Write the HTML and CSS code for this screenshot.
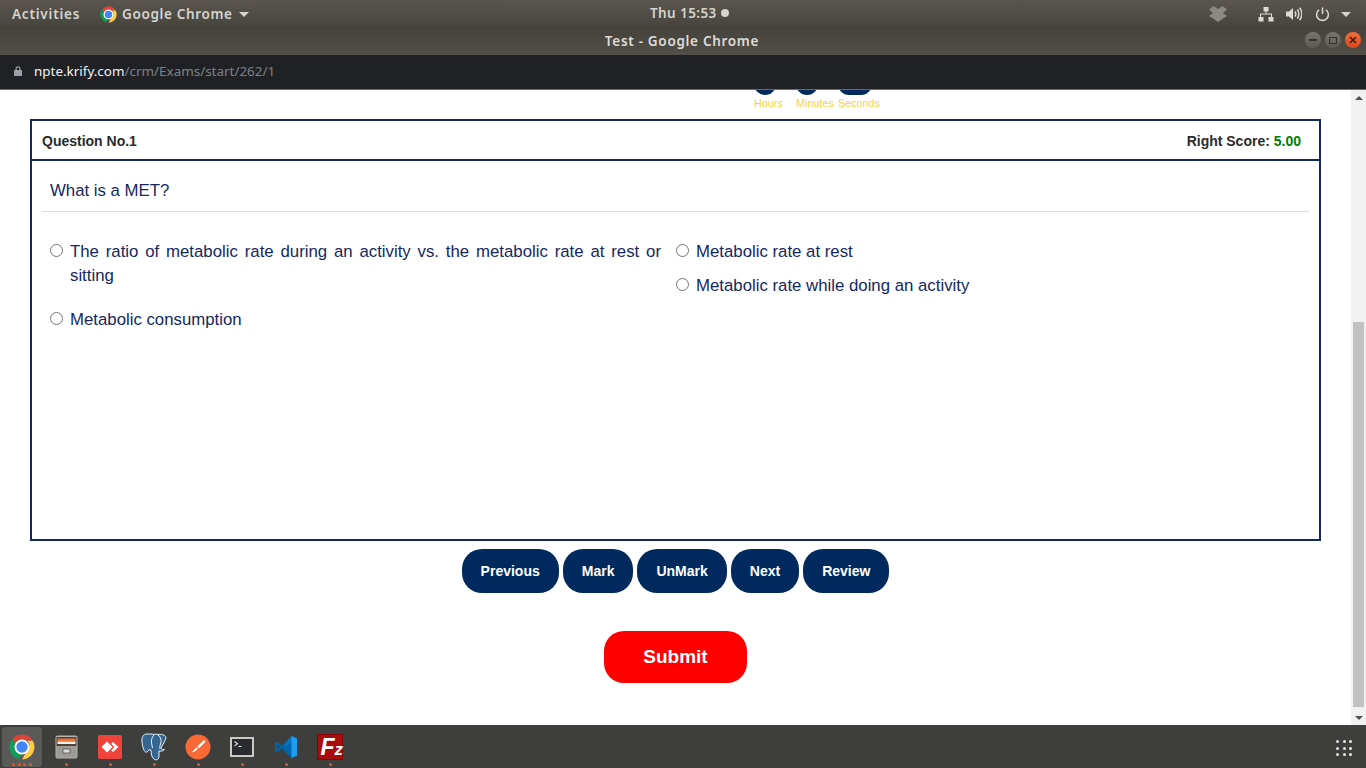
FILE: index.html
```html
<!DOCTYPE html>
<html lang="en">
<head>
    <meta charset="UTF-8">
    <meta name="viewport" content="width=device-width, initial-scale=1.0">
    <title>Test</title>
    <link rel="stylesheet" href="styles.css">
</head>
<body>
<div class="screen">
    <header class="topbar">
        <span class="activities">Activities</span>
        <span class="app-menu">
            <svg class="app-icon" viewBox="0 0 48 48" width="17" height="17">
                <path fill="#db4437" d="M24 1a23 23 0 0 1 19.9 11.5H24a11.5 11.5 0 0 0-11 8L6.3 9.300A23 23 0 0 1 24 1z"/>
                <path fill="#0f9d58" d="M4.100 35.500A23 23 0 0 1 6.300 9.300l10 17.300a9 9 0 0 0 7.700 8.900l-6.700 10.500A23 23 0 0 1 4.100 35.500z"/>
                <path fill="#ffcd40" d="M43.900 12.500A23 23 0 0 1 24 47l10-17.300a11.500 11.500 0 0 0 0-17.200z"/>
                <circle cx="24" cy="24" r="14" fill="#fff"/>
                <circle cx="24" cy="24" r="10.500" fill="#4285f4"/>
            </svg>
            <span class="app-name">Google Chrome</span>
            <i class="caret"></i>
        </span>
        <span class="clock">Thu 15:53<i class="clock-dot"></i></span>
        <span class="tray">
            <svg class="tray-dropbox" viewBox="0 0 18 16" width="18" height="16"><path fill="#8b8983" d="M0 3.500L4.500 0 9 3l4.500-3L18 3.500 14 7l4 3-4 2.500L9 16l-5-3.500L0 10l4-3z"/></svg>
            <svg class="tray-net" viewBox="0 0 16 16" width="16" height="16"><path fill="#dcdad5" d="M5.500 1h5v4.500h-2v2H14V11h1.500v4.500h-5V11H13V8.500H3V11h2.500v4.500h-5V11H2V7.500h5.500v-2h-2z"/></svg>
            <svg class="tray-vol" viewBox="0 0 16 16" width="16" height="16"><path fill="#dcdad5" d="M0 5.500h3L7 2v12l-4-3.500H0z"/><path fill="none" stroke="#dcdad5" stroke-width="1.500" d="M9 5.500c1 1.500 1 3.500 0 5M11.300 3.500c2 2.500 2 6.500 0 9M13.600 1.800c3 3.500 3 8.900 0 12.400"/></svg>
            <svg class="tray-power" viewBox="0 0 16 16" width="15" height="16"><path fill="none" stroke="#dcdad5" stroke-width="1.600" d="M4.300 3.600a6.300 6.300 0 1 0 7.400 0M8 1v7"/></svg>
            <i class="caret"></i>
        </span>
    </header>

    <div class="titlebar">
        <span class="window-title">Test - Google Chrome</span>
        <span class="window-buttons">
            <span class="win-btn"><i class="win-min"></i></span>
            <span class="win-btn"><i class="win-max"></i></span>
            <span class="win-btn win-close">
                <svg viewBox="0 0 8 8" width="8" height="8"><path stroke="#3a1a0c" stroke-width="1.500" d="M1 1l6 6M7 1L1 7"/></svg>
            </span>
        </span>
    </div>

    <div class="urlbar">
        <svg class="lock" viewBox="0 0 8 10" width="8" height="10"><path fill="#9aa0a6" d="M1.500 4V2.800a2.500 2.500 0 0 1 5 0V4H8v6H0V4zM2.700 4h2.600V2.800a1.300 1.300 0 0 0-2.600 0z"/></svg>
        <span class="url"><b>npte.krify.com</b>/crm/Exams/start/262/1</span>
    </div>

    <div class="viewport">
        <main class="page">
            <div class="timer">
                <div class="timer-item timer-hours"><span class="timer-blob"></span><span class="timer-label">Hours</span></div>
                <div class="timer-item timer-minutes"><span class="timer-blob"></span><span class="timer-label">Minutes</span></div>
                <div class="timer-item timer-seconds"><span class="timer-blob timer-blob-wide"></span><span class="timer-label">Seconds</span></div>
            </div>

            <section class="question-card">
                <div class="question-head">
                    <span>Question No.1</span>
                    <span>Right Score: <span class="score">5.00</span></span>
                </div>
                <div class="question-body">
                    <p class="question-text">What is a MET?</p>
                    <div class="options">
                        <div class="options-col options-left">
                            <label class="option"><input type="radio" name="opt"><span>The ratio of metabolic rate during an activity vs. the metabolic rate at rest or sitting</span></label>
                            <label class="option"><input type="radio" name="opt"><span>Metabolic consumption</span></label>
                        </div>
                        <div class="options-col options-right">
                            <label class="option"><input type="radio" name="opt"><span>Metabolic rate at rest</span></label>
                            <label class="option"><input type="radio" name="opt"><span>Metabolic rate while doing an activity</span></label>
                        </div>
                    </div>
                </div>
            </section>

            <div class="nav-buttons">
                <button type="button" class="btn-nav">Previous</button>
                <button type="button" class="btn-nav">Mark</button>
                <button type="button" class="btn-nav">UnMark</button>
                <button type="button" class="btn-nav">Next</button>
                <button type="button" class="btn-nav">Review</button>
            </div>

            <div class="submit-row">
                <button type="button" class="btn-submit">Submit</button>
            </div>
        </main>

        <div class="scrollbar">
            <i class="scroll-up"></i>
            <div class="scroll-track"><div class="scroll-thumb"></div></div>
            <i class="scroll-down"></i>
        </div>
    </div>

    <footer class="dock">
        <div class="dock-item dock-active">
            <svg viewBox="0 0 48 48" width="26" height="26">
                <path fill="#db4437" d="M24 1a23 23 0 0 1 19.900 11.500H24a11.500 11.500 0 0 0-11 8L6.300 9.300A23 23 0 0 1 24 1z"/>
                <path fill="#0f9d58" d="M4.100 35.500A23 23 0 0 1 6.300 9.300l10 17.300a9 9 0 0 0 7.700 8.900l-6.700 10.500A23 23 0 0 1 4.100 35.500z"/>
                <path fill="#ffcd40" d="M43.900 12.500A23 23 0 0 1 24 47l10-17.300a11.500 11.500 0 0 0 0-17.200z"/>
                <circle cx="24" cy="24" r="14" fill="#fff"/>
                <circle cx="24" cy="24" r="10.500" fill="#4285f4"/>
            </svg>
            <span class="dock-dots"><i></i><i></i><i></i><i></i></span>
        </div>
        <div class="dock-item">
            <svg viewBox="0 0 23 24" width="23" height="24">
                <rect x="0.500" y="0.500" width="22" height="23" rx="2" fill="#b5b4af"/>
                <rect x="1.500" y="2" width="20" height="9" fill="#4f4038"/>
                <rect x="2.500" y="3.500" width="18" height="3" fill="#e8743b"/>
                <rect x="2.500" y="6.500" width="18" height="2.500" fill="#f3efe6"/>
                <rect x="1.500" y="11" width="20" height="11.500" fill="#9c9b96"/>
                <rect x="8" y="14" width="7" height="4" fill="#dcdbd6" stroke="#555" stroke-width="0.800"/>
            </svg>
            <span class="dock-dots"><i></i></span>
        </div>
        <div class="dock-item">
            <svg viewBox="0 0 24 24" width="24" height="24">
                <rect width="24" height="24" rx="2" fill="#ef443b"/>
                <path fill="#fff" d="M9 6.500l5.500 5.500L9 17.500 3.500 12z"/>
                <path fill="#fff" d="M15 7l5.500 5-5.500 5-1.800-1.800 3.200-3.200-3.200-3.200z"/>
            </svg>
            <span class="dock-dots"><i></i></span>
        </div>
        <div class="dock-item">
            <svg viewBox="0 0 26 28" width="26" height="28">
                <path fill="#336791" stroke="#fff" stroke-width="0.900" d="M6 1c-4 0-5.500 3.500-5 8 .4 3.500 1.500 9 3.500 10 1.500.7 2.700-1 3.500-2.500 1 .5 1.500.5 2 .5 0 3 .5 8 3.500 9.500 2.500 1 4.500-.5 4.500-3.500v-5c2 .5 3.500.2 5.500-1.500-1.500.2-3 0-3.500-1.500C22 11 25 6.500 25 4.500 24 1.500 20 1 17 1.500 15.500 1 14 1 13 1.500 11 .8 8.500 1 6 1z"/>
                <path fill="none" stroke="#fff" stroke-width="0.900" d="M13 2c-2 2-3 5-2.500 8 .2 2 1 3 1 5M17 2c3 2 3.500 6 2.500 9-.5 1.500-1 3-.5 5"/>
            </svg>
            <span class="dock-dots"><i></i></span>
        </div>
        <div class="dock-item">
            <svg viewBox="0 0 26 26" width="26" height="26">
                <circle cx="13" cy="13" r="12.500" fill="#f76935"/>
                <path fill="#fff" d="M18.500 6.500c1-.7 2.300.7 1.500 1.700l-6 6-1.800-1.800zM11.500 13.500l1.500 1.500-3.800 3-1.200-.4-.6 1-.7-.6 1-1z"/>
            </svg>
            <span class="dock-dots"><i></i></span>
        </div>
        <div class="dock-item">
            <svg viewBox="0 0 24 20" width="24" height="20">
                <rect width="24" height="20" fill="#c9c9c5"/>
                <rect x="2" y="2" width="20" height="16" fill="#2a2b2e"/>
                <path fill="none" stroke="#e8e8e8" stroke-width="1.100" d="M4.500 4.500l3 2.200-3 2.200"/>
                <path stroke="#e8e8e8" stroke-width="1" d="M8.500 9.500h3"/>
            </svg>
            <span class="dock-dots"><i></i></span>
        </div>
        <div class="dock-item">
            <svg viewBox="0 0 24 24" width="24" height="24">
                <path fill="#0065a9" d="M17.500 1L7.800 10.500 3 6.700 1 7.800v8.400l2 1.100 4.800-3.800 9.700 9.500z"/>
                <path fill="#007acc" d="M17.500 1L23 3.500v17L17.500 23V7l-8 5z"/>
                <path fill="#1f9cf0" d="M17.500 1L23 3.500v17L17.500 23z"/>
                <path fill="#3e3e3d" d="M3.500 9.500L6 12l-2.500 2.500z"/>
            </svg>
            <span class="dock-dots"><i></i></span>
        </div>
        <div class="dock-item">
            <svg viewBox="0 0 26 26" width="26" height="26">
                <rect width="26" height="26" fill="#8b0000"/>
                <rect x="1" y="1" width="24" height="24" fill="#a80d0d"/>
                <text class="fz-logo" x="3.500" y="21"><tspan class="fz-big">F</tspan><tspan class="fz-small">z</tspan></text>
            </svg>
            <span class="dock-dots"><i></i></span>
        </div>
        <div class="dock-grid">
            <i></i><i></i><i></i><i></i><i></i><i></i><i></i><i></i><i></i>
        </div>
    </footer>
</div>
</body>
</html>
```

FILE: styles.css
```css
* {
    box-sizing: border-box;
}
html, body {
    margin: 0;
    height: 100%;
    overflow: hidden;
}
body {
    font-family: "Liberation Sans", Arial, sans-serif;
    background: #fff;
}
.screen {
    display: flex;
    flex-direction: column;
    height: 768px;
}

/* system top bar */
.topbar {
    position: relative;
    display: flex;
    align-items: center;
    height: 27px;
    flex-shrink: 0;
    padding: 1px 15px 0 12px;
    background: linear-gradient(#5a564f, #47443e);
    color: #d6d4ce;
    font-family: "Noto Sans", sans-serif;
    font-size: 13.5px;
    font-weight: 600;
    letter-spacing: 0.4px;
}
.activities {
    width: 88px;
    letter-spacing: 0.8px;
}
.app-menu {
    display: flex;
    align-items: center;
    gap: 5px;
}
.app-name {
    letter-spacing: 0.65px;
}
.caret {
    display: inline-block;
    width: 0;
    height: 0;
    border-left: 5px solid transparent;
    border-right: 5px solid transparent;
    border-top: 5px solid #d6d4ce;
}
.app-menu .caret {
    margin-left: 1px;
}
.clock {
    position: absolute;
    left: 650px;
    top: 4px;
    display: flex;
    align-items: center;
    gap: 4px;
}
.clock-dot {
    width: 8px;
    height: 8px;
    border-radius: 50%;
    background: #d6d4ce;
}
.tray {
    margin-left: auto;
    display: flex;
    align-items: center;
}
.tray-net {
    margin-left: 31px;
}
.tray-vol {
    margin-left: 12px;
}
.tray-power {
    margin-left: 13px;
}
.tray .caret {
    margin-left: 11px;
}

/* window title */
.titlebar {
    display: flex;
    align-items: center;
    justify-content: center;
    position: relative;
    height: 28px;
    flex-shrink: 0;
    background: linear-gradient(#45423c, #524f49);
    color: #dedcd6;
    font-family: "Noto Sans", sans-serif;
    font-size: 13.5px;
    font-weight: 600;
    letter-spacing: 0.7px;
}
.window-title {
    margin-left: -2px;
}
.window-buttons {
    position: absolute;
    right: 5px;
    top: 5px;
    display: flex;
    gap: 4px;
}
.win-btn {
    display: flex;
    align-items: center;
    justify-content: center;
    width: 16px;
    height: 16px;
    border-radius: 50%;
    background: linear-gradient(#77756f, #5c5a55);
}
.win-close {
    background: linear-gradient(#f0703a, #d9481c);
}
.win-min {
    width: 8px;
    height: 2px;
    background: #34322e;
}
.win-max {
    width: 8px;
    height: 7px;
    border: 1px solid #34322e;
}

/* browser location bar */
.urlbar {
    display: flex;
    align-items: center;
    height: 35px;
    flex-shrink: 0;
    padding: 0 0 2px 14px;
    background: #202124;
    border-bottom: 1px solid #6b6b6b;
}
.lock {
    margin-right: 12px;
}
.url {
    font-family: "Noto Sans", sans-serif;
    font-size: 13.45px;
    color: #7d8185;
}
.url b {
    font-weight: 400;
    color: #f1f3f4;
}

/* page */
.viewport {
    display: flex;
    flex: 1;
    min-height: 0;
}
.page {
    flex: 1;
    min-width: 0;
    overflow: hidden;
    padding: 0 30px;
    background: #fff;
}
.timer {
    display: flex;
    height: 29px;
    padding-left: 724px;
    font-size: 10.8px;
    color: #f7d23e;
}
.timer-item {
    display: flex;
    flex-direction: column;
}
.timer-hours {
    width: 42px;
}
.timer-minutes {
    width: 42px;
}
.timer-blob {
    display: block;
    width: 22px;
    height: 22px;
    margin-top: -17px;
    border-radius: 50%;
    background: #002a5e;
}
.timer-blob-wide {
    width: 34px;
    border-radius: 11px;
}
.timer-label {
    margin-top: 2px;
    line-height: 12px;
    white-space: nowrap;
}
.question-card {
    height: 422px;
    border: 2px solid #14285f;
}
.question-head {
    display: flex;
    justify-content: space-between;
    align-items: center;
    height: 40px;
    padding: 2px 18px 0 10px;
    border-bottom: 2px solid #14285f;
    font-size: 14px;
    font-weight: 700;
    color: #2b2b2b;
}
.score {
    color: #008000;
}
.question-body {
    padding: 0 10px;
}
.question-text {
    margin: 0;
    padding: 18px 8px 10px;
    height: 51px;
    line-height: 24px;
    border-bottom: 1px solid #ddd;
    font-size: 16.8px;
    color: #14285f;
}
.options {
    display: flex;
    padding-top: 28px;
}
.options-left {
    width: 627px;
    padding: 0 8px;
}
.options-left .option {
    margin-bottom: 20px;
}
.options-right {
    flex: 1;
    padding-left: 7px;
}
.options-right .option {
    margin-bottom: 10px;
}
.option {
    display: flex;
    align-items: flex-start;
    font-size: 16.8px;
    line-height: 24px;
    color: #14285f;
    text-align: justify;
}
.option input {
    flex-shrink: 0;
    width: 13px;
    height: 13px;
    margin: 4px 7px 0 0;
}
.nav-buttons {
    display: flex;
    justify-content: center;
    gap: 4px;
    margin-top: 8px;
}
.btn-nav {
    height: 44px;
    padding: 0 19px;
    border: none;
    border-radius: 20px;
    background: #002a5e;
    color: #fff;
    font-family: "Liberation Sans", Arial, sans-serif;
    font-size: 14px;
    font-weight: 700;
}
.submit-row {
    display: flex;
    justify-content: center;
    margin-top: 38px;
}
.btn-submit {
    width: 143px;
    height: 52px;
    border: none;
    border-radius: 20px;
    background: #f00;
    color: #fff;
    font-family: "Liberation Sans", Arial, sans-serif;
    font-size: 19px;
    font-weight: 700;
}

/* scrollbar */
.scrollbar {
    display: flex;
    flex-direction: column;
    align-items: center;
    width: 15px;
    flex-shrink: 0;
    background: #f1f1f1;
}
.scroll-up, .scroll-down {
    width: 0;
    height: 0;
    border-left: 4px solid transparent;
    border-right: 4px solid transparent;
}
.scroll-up {
    margin-top: 6px;
    border-bottom: 4px solid #505050;
}
.scroll-down {
    margin: 5px 0 5px;
    border-top: 4px solid #505050;
}
.scroll-track {
    flex: 1;
    display: flex;
    flex-direction: column;
    justify-content: flex-end;
    width: 100%;
    padding: 0 2px 4px;
}
.scroll-thumb {
    height: 385px;
    background: #c1c1c1;
}

/* launcher */
.dock {
    display: flex;
    align-items: stretch;
    height: 43px;
    flex-shrink: 0;
    padding: 0 14px 0 0;
    background: #3e3e3d;
}
.dock-item {
    position: relative;
    display: flex;
    align-items: center;
    justify-content: center;
    width: 44px;
}
.dock-active::before {
    content: "";
    position: absolute;
    left: 2px;
    right: 2px;
    top: 2px;
    bottom: 1px;
    border-radius: 3px;
    background: #5a5a59;
}
.dock-item svg {
    position: relative;
}
.dock-dots {
    position: absolute;
    left: 0;
    right: 0;
    bottom: 2px;
    display: flex;
    justify-content: center;
    gap: 2.5px;
}
.dock-dots i {
    width: 3px;
    height: 3px;
    border-radius: 50%;
    background: #e2572a;
}
.fz-logo {
    font-family: "Liberation Sans", Arial, sans-serif;
    font-style: italic;
    font-weight: 700;
    fill: #fff;
}
.fz-big {
    font-size: 23px;
}
.fz-small {
    font-size: 17px;
}
.dock-grid {
    margin: 15px 0 0 auto;
    display: grid;
    grid-template-columns: repeat(3, 3px);
    grid-auto-rows: 3px;
    gap: 3.5px;
    align-self: flex-start;
}
.dock-grid i {
    border-radius: 50%;
    background: #e8e8e8;
}
```
